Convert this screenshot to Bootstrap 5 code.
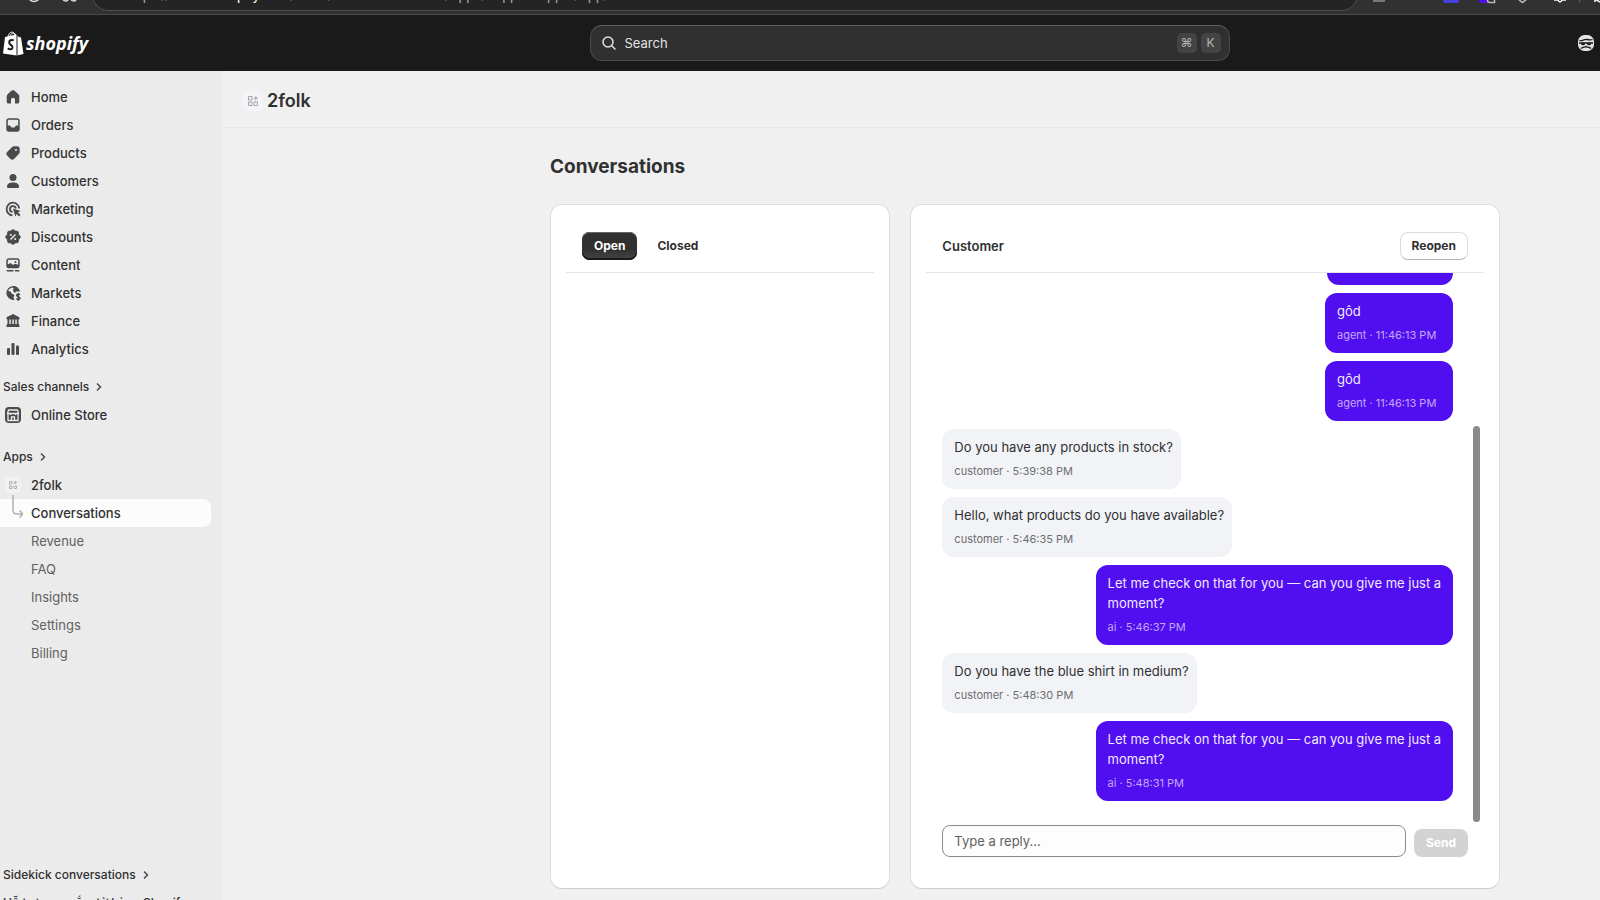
<!DOCTYPE html>
<html lang="en">
<head>
<meta charset="utf-8">
<meta name="viewport" content="width=device-width, initial-scale=1">
<title>2folk · Conversations · Shopify</title>
<link rel="stylesheet" href="https://cdn.jsdelivr.net/npm/bootstrap@5.3.0/dist/css/bootstrap.min.css">
<style>
  body { font-family: Inter, "Noto Sans", sans-serif; font-size: 13px; line-height: 20px; color: #303030; background: #f0f0f0; }
  a { color: inherit; text-decoration: none; }
  button, input { font-family: inherit; }

  /* browser toolbar */
  .chrome-bar { height: 15px; background: #313131; border-bottom: 1px solid #4a4a4a; overflow: hidden; align-items: flex-end; color: #a5a5a5; font-family: Roboto, sans-serif; font-size: 14px; }
  .chrome-bar svg { height: 14px; flex: none; }
  .omnibox { flex: 1; height: 32px; background: #242424; border: 1px solid #4f4f4f; border-radius: 16px; margin-bottom: 3px; padding: 0 10px 0 33px; line-height: 30px; white-space: nowrap; }
  .omnibox span { color: #fff; }

  /* admin header */
  .topbar { height: 56px; background: #1a1a1a; }
  .topbar .brand { width: 223px; padding-top: 2px; }
  .topbar .side { flex: 1 1 0; }
  .search-box { flex: 0 1 640px; height: 36px; border-radius: 12px; background: #303030; border: 1px solid #4a4a4a; border-top-color: #616161; color: #e3e3e3; padding: 0 8px 0 10px; }
  .search-box input { background: transparent; border: 0; outline: 0; color: #e3e3e3; padding: 0; font-size: 13px; }
  .search-box input::placeholder { color: #e3e3e3; opacity: 1; }
  .keycap { width: 20px; height: 20px; border-radius: 5px; background: #444; color: #b5b5b5; font: 12px/20px Inter, "DejaVu Sans", sans-serif; text-align: center; padding: 0; }

  /* sidebar */
  .layout-row { height: calc(100vh - 71px); }
  .side-nav { width: 223px; background: #ebebeb; padding-top: 12px; overflow: hidden; font-size: 13px; font-weight: 500; }
  .side-nav a { display: flex; align-items: center; height: 28px; gap: 8px; padding-left: 3px; margin-right: 12px; flex: none; white-space: nowrap; }
  .side-nav a svg { width: 20px; height: 20px; fill: #4a4a4a; flex: none; }
  .side-nav .section { font-size: 12px; gap: 4px; }
  .side-nav .section svg { width: 12px; height: 12px; fill: none; stroke: #4a4a4a; stroke-width: 1.500; }
  .side-nav .channels { margin-top: 10px; }
  .side-nav .apps { margin-top: 14px; }
  .side-nav .sub { padding-left: 31px; font-weight: 400; color: #616161; }
  .side-nav .sub.current { padding-left: 3px; background: #fcfcfd; border-radius: 0 8px 8px 0; font-weight: 500; color: #303030; }
  .side-nav .sub.current svg { height: 36px; margin-top: -8px; fill: none; stroke: #b0b0b0; stroke-width: 1.500; }
  .side-nav .app svg { fill: none; }
  .side-foot { margin-bottom: -17px; }

  /* page */
  .app-title { height: 57px; border-bottom: 1px solid #e8e8e8; padding: 4px 0 0 20px; font-size: 18px; font-weight: 600; gap: 4px; }
  .page-body { padding: 27px 100px 11px 327px; }
  .page-body h1 { font-size: 19px; line-height: 24px; font-weight: 650; margin-bottom: 25px; }
  .panels { display: grid; grid-template-columns: 340fr 589fr; gap: 20px; }
  .panel { background: #fff; border: 1px solid #dedede; border-bottom-color: #ccc; border-radius: 12px; padding: 16px 15px 15px; min-width: 0; }
  .panel-head { height: 52px; border-bottom: 1px solid #e5e5e5; padding: 0 16px 2px; }
  .act { height: 28px; border-radius: 8px; border: 0; padding: 0 12px; font-size: 12px; line-height: 16px; font-weight: 650; background: transparent; color: #303030; }
  .act-dark { background: linear-gradient(#303030 60%, #454545); color: #fff; box-shadow: inset 0 -2px 0 #1a1a1a, inset 0 1px 0 #666, inset 0 0 0 1px #333; }
  .act-line { background: #fff; border: 1px solid #dcdcdc; border-bottom-color: #b5b5b5; padding: 0 11px; }
  .act:disabled { background: #d2d3d2; color: #fff; }
  .messages { flex: 1 1 0; min-height: 0; overflow: hidden; padding: 0 31px 24px 16px; gap: 8px; justify-content: flex-end; }
  .bubble { flex: none; min-width: 128px; max-width: 70%; padding: 8px 12px; border-radius: 12px; background: #f2f3f7; align-self: flex-start; }
  .bubble p { margin: 0 -4px 4px 0; }
  .bubble footer { font-size: 11px; color: #6d6e70; }
  .bubble.own { background: #510ef1; color: #f0eaff; align-self: flex-end; }
  .bubble.own footer { color: #c3a8fb; }
  .bubble.earlier { min-width: 126px; height: 60px; }
  .scroll-thumb { position: absolute; right: 4px; bottom: 3px; width: 7px; height: 396px; border-radius: 4px; background: #8a8a8a; }
  .reply { padding: 0 16px 16px; gap: 8px; align-items: flex-end; }
  .reply input { flex: 1; min-width: 0; height: 32px; border: 1px solid #8a8a8a; border-radius: 8px; background: #fdfdfd; padding: 0 11px; font-size: 13px; }
  .reply input::placeholder { color: #616161; opacity: 1; }
</style>
</head>
<body class="vh-100 overflow-hidden">

<div class="chrome-bar d-flex">
  <svg width="92" viewBox="0 0 92 14" fill="none" stroke="#ddd" stroke-width="1.500"><circle cx="34" cy="-4" r="5.500"/><path d="M63 0 Q66 2 68 0 M71 0 Q74 2 76 0"/></svg>
  <div class="omnibox d-flex">
    <div class="flex-grow-1">https://admin.<span>shopify</span>.com/store/2folk-dev-stores-1/apps/support-app-1/app/conversations</div>
  </div>
  <svg width="242" viewBox="0 0 242 14">
    <path d="M15 0 H27 V2 H15 Z M17 0 V2" fill="#777"/>
    <path d="M85 -4 H101 V1 Q101 3 98 3 H88 Q85 3 85 1 Z" fill="#4640de"/>
    <path d="M121 -4 H129 V3 H124 Q121 3 121 1 Z" fill="#510ef1"/>
    <path d="M129.500 -3 H136.500 V2.500 H131.500 Q129.500 2.500 129.500 0 Z M160 -1 L164.500 2.500 L169 -1" fill="none" stroke="#bbb" stroke-width="1.500"/>
    <path d="M196 0 H200 Q202 4 204 0 H208 M237 2 V-1 L242 2" fill="none" stroke="#fff" stroke-width="1.500"/>
    <path d="M221.500 0 V2" stroke="#666"/>
  </svg>
</div>

<header class="topbar d-flex align-items-center">
  <a href="#" class="brand" aria-label="Shopify">
    <svg class="d-block" width="90" height="26" viewBox="0 0 90 26">
      <path d="M5 6 L16 3.500 L19 6 L21 6.500 L23.500 23 L16.500 24.500 L3 22.500 Z" fill="#fff"/>
      <path d="M8 6 C8.500 2 11 0.800 12.500 1.200 C14.500 1.500 15 4 15 5 M10 5 C11 2 14 1 16 4" fill="none" stroke="#fff"/>
      <path d="M17 4 V24.500" stroke="#1a1a1a"/>
      <path d="M13.800 9.400 C11.500 8.200 9 9.500 9.200 11.600 C9.400 13.800 12.800 14.200 12.500 16.700 C12.200 18.700 9.500 18.800 7.800 17.200" fill="none" stroke="#1a1a1a" stroke-width="2"/>
      <text x="26" y="19" fill="#fff" font-family="Open Sans, sans-serif" font-size="18" font-weight="700" font-style="italic">shopify</text>
    </svg>
  </a>
  <div class="side"></div>
  <label class="search-box d-flex align-items-center">
    <svg width="16" height="16" viewBox="0 0 16 16" fill="none" stroke="#e3e3e3" stroke-width="1.500" stroke-linecap="round"><circle cx="7" cy="7" r="5"/><path d="M10.700 10.700 L14 14"/></svg>
    <input class="flex-grow-1 ms-2" type="search" placeholder="Search" aria-label="Search">
    <kbd class="keycap me-1">⌘</kbd><kbd class="keycap">K</kbd>
  </label>
  <div class="side d-flex justify-content-end pe-1">
    <svg width="20" height="20" viewBox="0 0 20 20"><rect x="2" y="2" width="16" height="16" rx="6.500" fill="#e3e3e3"/><path d="M3.500 7.500 C6 8.500 8 6 11 6.500 S15 7 16.500 6.500 M3 10 H17 M5 15.500 C7 13.500 9 14.500 10 13.500 C11 14.500 13 13.500 15 15.500" stroke="#1a1a1a" stroke-width="1.300" fill="none"/><ellipse cx="7" cy="11" rx="2" ry="1.300" fill="#1a1a1a"/><ellipse cx="13" cy="11" rx="2" ry="1.300" fill="#1a1a1a"/></svg>
  </div>
</header>

<div class="layout-row d-flex">
  <nav class="side-nav d-flex flex-column flex-shrink-0">
    <a href="#"><svg viewBox="0 0 20 20"><path d="M10 3.300 C9.200 3.300 8.600 3.600 4.700 7.200 C4 7.900 3.700 8.500 3.700 9.500 V14.500 C3.700 16 4.500 16.500 5.500 16.500 H8 V12.500 C8 11.500 8.800 11 10 11 S12 11.500 12 12.500 V16.500 H14.500 C15.500 16.500 16.300 16 16.300 14.500 V9.500 C16.300 8.500 16 7.900 15.300 7.200 C11.400 3.600 10.800 3.300 10 3.300 Z"/></svg>Home</a>
    <a href="#"><svg viewBox="0 0 20 20"><path fill-rule="evenodd" d="M6 3.300 H14 A2.700 2.700 0 0 1 16.700 6 V14 A2.700 2.700 0 0 1 14 16.700 H6 A2.700 2.700 0 0 1 3.300 14 V6 A2.700 2.700 0 0 1 6 3.300 Z M6 4.700 A1.200 1.200 0 0 0 4.800 6 V10.500 H7 L8.500 12.500 H11.500 L13 10.500 H15.200 V6 A1.200 1.200 0 0 0 14 4.700 Z"/></svg>Orders</a>
    <a href="#"><svg viewBox="0 0 20 20"><path fill-rule="evenodd" d="M11 3.300 H14 A2.700 2.700 0 0 1 16.700 6 V9 C16.700 10 16.200 10.700 15.600 11.300 L11 15.900 C10 16.900 8.500 16.900 7.500 15.900 L4.100 12.500 C3.100 11.500 3.100 10 4.100 9 L8.700 4.400 C9.400 3.700 10 3.300 11 3.300 Z M13 6 A1 1 0 1 0 13 8 A1 1 0 1 0 13 6 Z"/></svg>Products</a>
    <a href="#"><svg viewBox="0 0 20 20"><circle cx="10" cy="6.500" r="3.500"/><path d="M4 15.500 C4 13 6.500 11.500 10 11.500 S16 13 16 15.500 C16 16.500 15.500 17 14.500 17 H5.500 C4.500 17 4 16.500 4 15.500 Z"/></svg>Customers</a>
    <a href="#"><svg viewBox="0 0 20 20"><path d="M16.200 9.500 A6.300 6.300 0 1 0 9.500 16.300 M12.900 9.500 A3 3 0 1 0 9.500 13" fill="none" stroke="#4a4a4a" stroke-width="1.800"/><path d="M10 9.500 L17.500 12 L15 13.500 L17.500 16 L16 17.500 L13.700 15 L12.300 17.500 Z"/></svg>Marketing</a>
    <a href="#"><svg viewBox="0 0 20 20"><path d="M10 2.500 L12 4 L15 4.500 L15.600 7.500 L17.500 10 L15.600 12.500 L15 15.500 L12 16 L10 17.500 L8 16 L5 15.500 L4.400 12.500 L2.500 10 L4.400 7.500 L5 4.500 L8 4 Z" stroke="#4a4a4a" stroke-linejoin="round"/><path d="M7.500 12.500 L12.500 7.500" stroke="#ebebeb" stroke-width="1.500"/><circle cx="7.800" cy="8" r="1" fill="#ebebeb"/><circle cx="12.200" cy="12" r="1" fill="#ebebeb"/></svg>Discounts</a>
    <a href="#"><svg viewBox="0 0 20 20"><path fill-rule="evenodd" d="M6 3.300 H14 A2.700 2.700 0 0 1 16.700 6 V11 A2.500 2.500 0 0 1 14 13.300 H6 A2.500 2.500 0 0 1 3.300 11 V6 A2.700 2.700 0 0 1 6 3.300 Z M6 4.700 A1 1 0 0 0 4.800 6 V9.500 L7.500 8 L10 10 L12 8.800 L15.200 9.800 V6 A1 1 0 0 0 14 4.700 Z"/><circle cx="12.500" cy="7" r="1"/><path d="M3.700 15 H10.500 V16.500 H3.700 Z M12 15 H16.300 V16.500 H12 Z"/></svg>Content</a>
    <a href="#"><svg viewBox="0 0 20 20"><path fill-rule="evenodd" d="M10 3 A7 7 0 1 0 11.500 16.900 L10.500 14.500 L11.500 12 L8.500 10.500 L8 9 L5 7.500 L6.500 6 C8 5 8.500 4.500 9 4.500 L10.500 5 L10 8 L12 10 L13 8.500 L17 8.500 C16.200 5 13.500 3 10 3 Z"/><path d="M17 11.700 C15.500 10.500 13.500 11 13.600 12.500 C13.700 14 17 13.500 17 15.200 C17 16.700 14.500 16.800 13.300 15.600 M15.300 10 V18" fill="none" stroke="#4a4a4a" stroke-width="1.400"/></svg>Markets</a>
    <a href="#"><svg viewBox="0 0 20 20"><path d="M10 3 L16 6 C16.700 6.500 16.700 8.300 16 8.500 H4 C3.300 8.300 3.300 6.500 4 6 Z M4.500 8.500 H6.300 V13 H4.500 Z M7.800 8.500 H9.300 V13 H7.800 Z M10.800 8.500 H12.300 V13 H10.800 Z M13.800 8.500 H15.500 V13 H13.800 Z M4 13 H16 L16.700 16 H3.300 Z"/></svg>Finance</a>
    <a href="#"><svg viewBox="0 0 20 20"><rect x="4" y="9" width="3" height="7" rx="1"/><rect x="8.500" y="4" width="3" height="12" rx="1"/><rect x="13" y="6.500" width="3" height="9.500" rx="1"/></svg>Analytics</a>
    <a href="#" class="section channels">Sales channels <svg viewBox="0 0 12 12"><path d="M4 2.500 L7.500 6 L4 9.500"/></svg></a>
    <a href="#"><svg viewBox="0 0 20 20"><rect x="2" y="2" width="16" height="16" rx="4"/><path d="M5 9 V15.500 H15 V9 M5.500 5 H14.500 L15.500 8.500 H4.500 Z M8.500 15.500 V12 H11.500 V15.500 M7.500 8.500 V10 M12.500 8.500 V10" fill="none" stroke="#ebebeb" stroke-width="1.300"/></svg>Online Store</a>
    <a href="#" class="section apps">Apps <svg viewBox="0 0 12 12"><path d="M4 2.500 L7.500 6 L4 9.500"/></svg></a>
    <a href="#" class="app"><svg viewBox="0 0 20 20"><rect x="2" y="2" width="16" height="16" rx="4" fill="#f1f1f1"/><path d="M6.500 6.500 H9 V9 H6.500 Z M6.500 11 H9 V13.500 H6.500 Z M11 11 H13.500 V13.500 H11 Z M12.300 5.800 V9.200 M10.600 7.500 H14" stroke="#b0b0b0"/></svg>2folk</a>
    <a href="#" class="sub current" aria-current="page"><svg viewBox="0 0 20 36"><path d="M10 4 V19 Q10 23 14 23 H19 M16.500 19.500 L20 23 L16.500 26.500"/></svg>Conversations</a>
    <a href="#" class="sub">Revenue</a>
    <a href="#" class="sub">FAQ</a>
    <a href="#" class="sub">Insights</a>
    <a href="#" class="sub">Settings</a>
    <a href="#" class="sub">Billing</a>
    <div class="side-foot mt-auto">
      <a href="#" class="section">Sidekick conversations <svg viewBox="0 0 12 12"><path d="M4 2.500 L7.500 6 L4 9.500"/></svg></a>
      <a href="#" class="section">Hỗ trợ mua sắm từ hàng Shopify</a>
    </div>
  </nav>

  <main class="flex-grow-1 d-flex flex-column">
    <div class="app-title d-flex align-items-center">
      <svg width="20" height="20" viewBox="0 0 20 20" fill="none"><rect width="20" height="20" rx="5" fill="#f3f3f8"/><path d="M5.500 5.500 H9 V9 H5.500 Z M5.500 11 H9 V14.500 H5.500 Z M11 11 H14.500 V14.500 H11 Z M12.800 5 V9.400 M10.600 7.200 H15" stroke="#a5a5a5"/></svg>
      2folk
    </div>
    <div class="page-body flex-grow-1 d-flex flex-column">
      <h1>Conversations</h1>
      <div class="panels flex-grow-1">
        <section class="panel">
          <div class="panel-head d-flex align-items-center gap-2">
            <button type="button" class="act act-dark">Open</button>
            <button type="button" class="act">Closed</button>
          </div>
        </section>
        <section class="panel d-flex flex-column">
          <div class="panel-head d-flex align-items-center justify-content-between">
            <span class="fw-semibold">Customer</span>
            <button type="button" class="act act-line">Reopen</button>
          </div>
          <div class="messages d-flex flex-column position-relative">
            <article class="bubble own earlier"></article>
            <article class="bubble own"><p>gôd</p><footer>agent · 11:46:13 PM</footer></article>
            <article class="bubble own"><p>gôd</p><footer>agent · 11:46:13 PM</footer></article>
            <article class="bubble"><p>Do you have any products in stock?</p><footer>customer · 5:39:38 PM</footer></article>
            <article class="bubble"><p>Hello, what products do you have available?</p><footer>customer · 5:46:35 PM</footer></article>
            <article class="bubble own"><p>Let me check on that for you — can you give me just a moment?</p><footer>ai · 5:46:37 PM</footer></article>
            <article class="bubble"><p>Do you have the blue shirt in medium?</p><footer>customer · 5:48:30 PM</footer></article>
            <article class="bubble own"><p>Let me check on that for you — can you give me just a moment?</p><footer>ai · 5:48:31 PM</footer></article>
            <div class="scroll-thumb"></div>
          </div>
          <form class="reply d-flex">
            <input type="text" placeholder="Type a reply..." aria-label="Type a reply">
            <button type="submit" class="act" disabled>Send</button>
          </form>
        </section>
      </div>
    </div>
  </main>
</div>

<script src="https://cdn.jsdelivr.net/npm/bootstrap@5.3.0/dist/js/bootstrap.bundle.min.js"></script>
</body>
</html>
